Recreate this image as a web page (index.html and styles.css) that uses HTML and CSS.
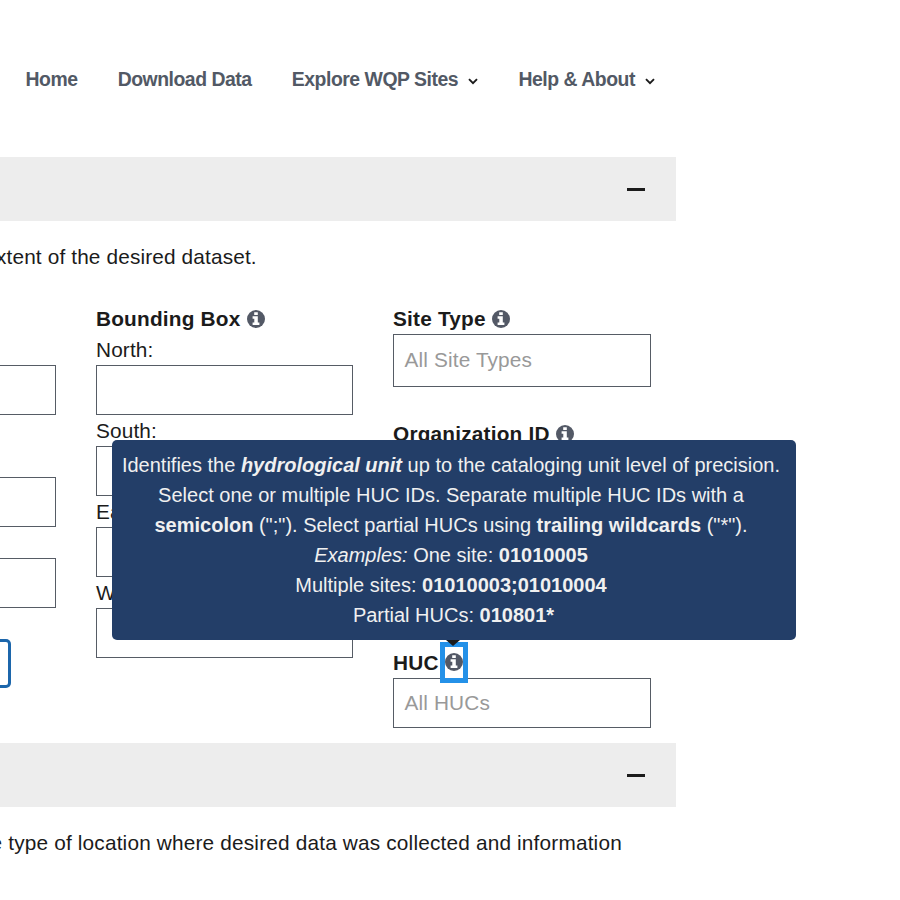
FILE: index.html
```html
<!DOCTYPE html>
<html lang="en">
<head>
<meta charset="utf-8">
<title>Water Quality Portal</title>
<link rel="stylesheet" href="styles.css">
</head>
<body>
<svg class="defs" aria-hidden="true">
  <symbol id="info" viewBox="0 0 18 18">
    <circle cx="9" cy="9" r="9" fill="#535966"/>
    <path d="M7.2 2.2h3.6v2.8H7.2zM5.6 6.3h5.2v6.2h1.6v2.4H5.6v-2.4h1.7V8.7H5.6z" fill="#fff"/>
  </symbol>
  <symbol id="chevron" viewBox="0 0 10 7">
    <path d="M1 1.2l4 4 4-4" fill="none" stroke="#1b1b1b" stroke-width="1.9"/>
  </symbol>
</svg>
<nav class="nav">
  <a class="home">Home</a>
  <a class="download">Download Data</a>
  <a class="explore">Explore WQP Sites <svg class="chev"><use href="#chevron"/></svg></a>
  <a class="help">Help &amp; About <svg class="chev"><use href="#chevron"/></svg></a>
</nav>
<main>
  <div class="band"><span class="minus"></span></div>
  <p class="desc">xtent of the desired dataset.</p>
  <div class="form">
    <div class="col first">
      <div class="input"></div>
      <div class="input second"></div>
      <div class="input third"></div>
      <div class="button"></div>
    </div>
    <div class="col">
      <div class="label">Bounding Box <svg class="info"><use href="#info"/></svg></div>
      <div class="side">North:</div><div class="input"></div>
      <div class="side">South:</div><div class="input"></div>
      <div class="side">East:</div><div class="input"></div>
      <div class="side">West:</div><div class="input"></div>
    </div>
    <div class="col last">
      <div class="label site">Site Type <svg class="info"><use href="#info"/></svg></div>
      <div class="input tall">All Site Types</div>
      <div class="label org">Organization ID <svg class="info"><use href="#info"/></svg></div>
      <div class="label huc"><span class="name">HUC</span><span class="anchor"><svg class="info"><use href="#info"/></svg>
        <span class="tooltip">
          <span class="line l1">Identifies the <b><i>hydrological unit</i></b> up to the cataloging unit level of precision.</span>
          <span class="line l2">Select one or multiple HUC IDs. Separate multiple HUC IDs with a</span>
          <span class="line l3"><b>semicolon</b> (";"). Select partial HUCs using <b>trailing wildcards</b> ("*").</span>
          <span class="line l4"><i>Examples:</i> One site: <b>01010005</b></span>
          <span class="line l5">Multiple sites: <b>01010003;01010004</b></span>
          <span class="line l6">Partial HUCs: <b>010801*</b></span>
        </span></span></div>
      <div class="input">All HUCs</div>
    </div>
  </div>
  <div class="band"><span class="minus"></span></div>
  <p class="desc tail">e type of location where desired data was collected and information</p>
</main>
</body>
</html>
```
FILE: styles.css
```css
* { box-sizing: border-box; }
body {
  margin: 0;
  width: 900px;
  height: 900px;
  overflow: hidden;
  background: #fff;
  color: #1b1b1b;
  font: 20.8px/30px "Liberation Sans", Arial, sans-serif;
  letter-spacing: 0.14px;
}
.defs { position: absolute; width: 0; height: 0; }
.nav {
  display: flex;
  height: 157px;
  padding: 64px 0 0 25.5px;
  gap: 40.2px;
  font-size: 19.4px;
  font-weight: 700;
  letter-spacing: -0.47px;
  color: #525965;
  white-space: nowrap;
}
.nav a { display: flex; align-items: center; height: 30px; }
.chev { width: 10px; height: 7px; margin: 4px 0 0 10.2px; }
.band {
  display: flex;
  justify-content: flex-end;
  align-items: center;
  width: 676px;
  height: 64px;
  padding-right: 31px;
  background: #ededed;
}
.minus { width: 18px; height: 3px; background: #1b1b1b; }
.desc { margin: 0 0 0 -4px; height: 83px; padding-top: 21px; white-space: nowrap; }
.tail { height: auto; margin-left: -9.5px; letter-spacing: 0.175px; }
.form { display: flex; gap: 40px; height: 439px; }
.col { width: 257px; }
.first { width: 56px; padding-top: 61px; }
.last { width: 258px; }
.input {
  height: 50px;
  border: 1px solid #565c65;
  padding: 0 10.5px;
  line-height: 48px;
  color: #999;
}
.first .input { border-left: 0; }
.first .second { margin-top: 62px; }
.first .third { margin-top: 31px; }
.button {
  width: 11px;
  height: 49px;
  margin-top: 31px;
  border: 3px solid #1c66ab;
  border-left: 0;
  border-radius: 0 5px 5px 0;
}
.label {
  display: flex;
  align-items: center;
  height: 30px;
  font-weight: 700;
  letter-spacing: 0.2px;
  white-space: nowrap;
}
.info { display: block; flex: none; width: 18px; height: 18px; margin-left: 6px; }
.side { height: 31px; padding-top: 1px; }
.tall { height: 53px; line-height: 50px; }
.org { margin-top: 32px; }
.huc { margin-top: 198px; height: 31px; padding-bottom: 1px; }
.name { width: 47px; padding-top: 1px; }
.anchor {
  position: relative;
  width: 28px;
  height: 41px;
  border: 5px solid #2491e8;
  flex: none;
}
.anchor > .info { margin: 6px 0 0; }
.tooltip {
  position: absolute;
  left: -333px;
  top: -207px;
  width: 684px;
  height: 200px;
  padding: 10px 13px 10px 7px;
  border-radius: 5px;
  background: #233e68;
  color: #f0f0f0;
  font-size: 20px;
  font-weight: 400;
  letter-spacing: 0;
  text-align: center;
}
.tooltip::after {
  content: "";
  position: absolute;
  left: 334px;
  top: 200px;
  border: 7.5px solid transparent;
  border-top: 6px solid #1b1b1b;
  border-bottom: 0;
}
.line { display: block; height: 30px; }
.l6 { padding-left: 5px; }
```
